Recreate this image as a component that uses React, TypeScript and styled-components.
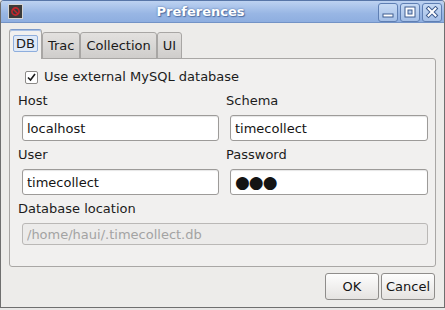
import styled, { createGlobalStyle } from "styled-components";

const GlobalStyle = createGlobalStyle`
  html, body {
    margin: 0;
    padding: 0;
    background: #e8e7e6;
  }

  body {
    font-family: "DejaVu Sans", "Noto Sans", sans-serif;
    font-size: 13px;
    color: #1c1c1c;
  }
`;

const Window = styled.div`
  width: 445px;
  height: 308px;
  box-sizing: border-box;
  border: 1px solid #6f6f6f;
  border-top-color: #5876a8;
  border-radius: 4px 4px 0 0;
  background: #edecea;
  display: flex;
  flex-direction: column;
  overflow: hidden;
`;

const TitleBar = styled.div`
  flex: none;
  height: 22px;
  box-sizing: border-box;
  display: flex;
  align-items: center;
  padding: 0 2px 0 7px;
  background: linear-gradient(#bdd2f1, #98b6e4 60%, #8eaee0);
  border-bottom: 1px solid #7393c6;
`;

const Title = styled.div`
  flex: 1;
  text-align: center;
  font-weight: bold;
  color: #fff;
  line-height: 16px;
  text-shadow: 0 0 2px #4a6a9e, 1px 1px 1px #5272a6;
`;

const WinButtons = styled.div`
  display: flex;
  gap: 2px;
  margin-top: 1px;
`;

const WinButton = styled.div`
  width: 20px;
  height: 19px;
  box-sizing: border-box;
  border: 1px solid #5f7fb3;
  border-radius: 3px;
  background: linear-gradient(#c7daf4, #a4bfe7);
  display: flex;
  align-items: center;
  justify-content: center;
`;

const Body = styled.div`
  flex: 1;
  display: flex;
  flex-direction: column;
  padding: 6px 8px 7px 8px;
`;

const TabBar = styled.div`
  display: flex;
  align-items: flex-end;
  margin-bottom: -1px;
  position: relative;
  z-index: 1;
`;

const Tab = styled.div<{ $active?: boolean }>`
  box-sizing: border-box;
  display: flex;
  align-items: flex-start;
  height: ${({ $active }) => ($active ? "30px" : "27px")};
  padding: 5px ${({ $active }) => ($active ? "6px" : "5px")} 0;
  line-height: 16px;
  border: 1px solid #a8a6a4;
  border-top-color: ${({ $active }) => ($active ? "#7c9bcb" : "#a8a6a4")};
  border-bottom: ${({ $active }) => ($active ? "none" : "1px solid #a8a6a4")};
  border-radius: 3px 3px 0 0;
  background: ${({ $active }) =>
    $active ? "#f1f0ef" : "linear-gradient(#e3e1df, #cfcdcb)"};
  box-shadow: ${({ $active }) => ($active ? "inset 0 1px 0 #a9c1e6" : "none")};
  color: #1a1a1a;
`;

const FocusLabel = styled.span`
  display: block;
  margin: 0 -3px;
  padding: 0 2px;
  line-height: 15px;
  border: 1px solid #8eaedd;
  border-radius: 2px;
  background: #dfe9f7;
`;

const Pane = styled.div`
  flex: 1;
  display: flex;
  flex-direction: column;
  border: 1px solid #a9a7a5;
  border-radius: 0 3px 3px 3px;
  background: #f1f0ef;
  padding: 10px 7px 0 8px;
`;

const CheckRow = styled.label`
  display: flex;
  align-items: center;
  gap: 6px;
  margin-left: 7px;
  line-height: 16px;
`;

const CheckBox = styled.span`
  width: 13px;
  height: 13px;
  box-sizing: border-box;
  border: 1px solid #8c8a88;
  border-radius: 2px;
  background: #fff;
  display: flex;
  align-items: center;
  justify-content: center;
`;

const FieldGrid = styled.div`
  display: grid;
  grid-template-columns: 201px 1fr;
  column-gap: 7px;
  row-gap: 6px;
  margin-top: 8px;
`;

const Field = styled.div<{ $wide?: boolean }>`
  display: flex;
  flex-direction: column;
  gap: 6px;
  grid-column: ${({ $wide }) => ($wide ? "1 / span 2" : "auto")};
`;

const Label = styled.div`
  line-height: 16px;
  color: #1c1c1c;
`;

const Input = styled.input<{ $dots?: boolean }>`
  box-sizing: border-box;
  height: 26px;
  width: calc(100% - 4px);
  margin: 0 0 0 4px;
  padding: 0 4px;
  border: 1px solid #9d9b99;
  border-radius: 3px;
  background: #fff;
  box-shadow: inset 0 1px 1px rgba(0, 0, 0, 0.1);
  font-family: "DejaVu Sans", sans-serif;
  font-size: ${({ $dots }) => ($dots ? "17px" : "13px")};
  letter-spacing: ${({ $dots }) => ($dots ? "-1px" : "normal")};
  color: #141414;
  outline: none;

  &:disabled {
    height: 22px;
    background: #ecebea;
    border-color: #bab8b6;
    box-shadow: none;
    color: #a3a3a3;
  }
`;

const ButtonRow = styled.div`
  display: flex;
  justify-content: flex-end;
  gap: 2px;
  margin: 6px 1px 0 0;
`;

const Button = styled.button`
  width: 54px;
  height: 27px;
  padding: 0;
  border: 1px solid #8f8d8b;
  border-radius: 3px;
  background: linear-gradient(#fdfdfd, #e5e3e1);
  font-family: "DejaVu Sans", sans-serif;
  font-size: 13px;
  color: #141414;
`;

const AppIcon = () => (
  <svg width="15" height="15" viewBox="0 0 15 15">
    <rect x="0.5" y="0.5" width="14" height="14" fill="#3a3a3a" stroke="#d4d4d4" />
    <circle cx="7.5" cy="7.5" r="3.6" fill="none" stroke="#c2262c" strokeWidth="1.6" />
    <path d="M5 5l5 5" stroke="#c2262c" strokeWidth="1.4" />
  </svg>
);

const glyph = (d: string) => (
  <svg width="14" height="13" viewBox="0 0 14 13">
    <path d={d} fill="none" stroke="#3f5d8f" strokeWidth="4" strokeLinecap="square" />
    <path d={d} fill="none" stroke="#fff" strokeWidth="2" strokeLinecap="square" />
  </svg>
);

const Check = () => (
  <svg width="11" height="11" viewBox="0 0 11 11">
    <path d="M2 5.5l2.5 2.5L9 2" fill="none" stroke="#1a1a1a" strokeWidth="1.6" />
  </svg>
);

const App = () => {
  return (
    <>
      <GlobalStyle />
      <Window>
        <TitleBar>
          <AppIcon />
          <Title>Preferences</Title>
          <WinButtons>
            <WinButton>{glyph("M3.5 9.5h7")}</WinButton>
            <WinButton>{glyph("M3.5 2.5h7v7h-7z")}</WinButton>
            <WinButton>{glyph("M3.5 2.5l7 7M10.5 2.5l-7 7")}</WinButton>
          </WinButtons>
        </TitleBar>
        <Body>
          <TabBar>
            <Tab $active>
              <FocusLabel>DB</FocusLabel>
            </Tab>
            <Tab>Trac</Tab>
            <Tab>Collection</Tab>
            <Tab>UI</Tab>
          </TabBar>
          <Pane>
            <CheckRow>
              <CheckBox>
                <Check />
              </CheckBox>
              Use external MySQL database
            </CheckRow>
            <FieldGrid>
              <Field>
                <Label>Host</Label>
                <Input defaultValue="localhost" />
              </Field>
              <Field>
                <Label>Schema</Label>
                <Input defaultValue="timecollect" />
              </Field>
              <Field>
                <Label>User</Label>
                <Input defaultValue="timecollect" />
              </Field>
              <Field>
                <Label>Password</Label>
                <Input $dots readOnly value="●●●" />
              </Field>
              <Field $wide>
                <Label>Database location</Label>
                <Input disabled defaultValue="/home/haui/.timecollect.db" />
              </Field>
            </FieldGrid>
          </Pane>
          <ButtonRow>
            <Button>OK</Button>
            <Button>Cancel</Button>
          </ButtonRow>
        </Body>
      </Window>
    </>
  );
};

export default App;
